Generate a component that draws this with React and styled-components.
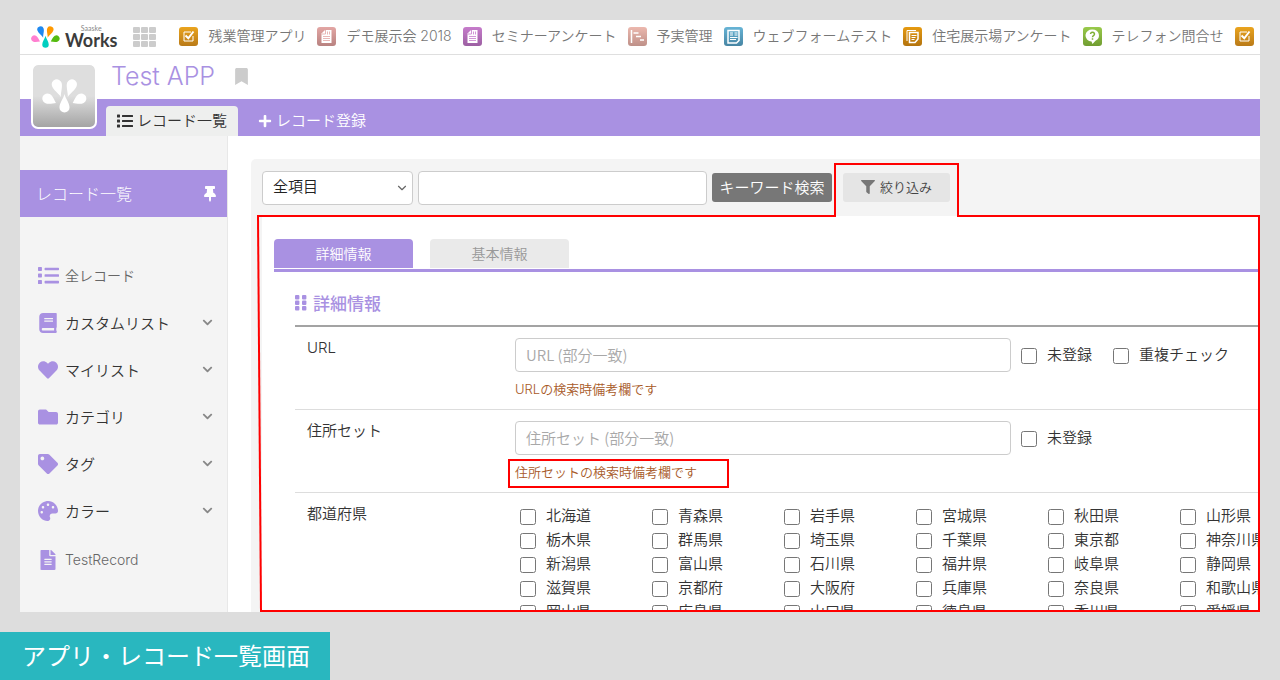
import React from "react";
import styled, { createGlobalStyle } from "styled-components";
import {
  FaBook,
  FaBookmark,
  FaChevronDown,
  FaFileAlt,
  FaFilter,
  FaFolder,
  FaHeart,
  FaList,
  FaPalette,
  FaPlus,
  FaTag,
  FaThumbtack,
} from "react-icons/fa";
import { LuChevronDown } from "react-icons/lu";

const PURPLE = "#a991e2";
const PANEL = "#f4f4f4";
const RED = "#ff0000";

const GlobalStyle = createGlobalStyle`
  * {
    box-sizing: border-box;
  }
  body {
    margin: 0;
    background: #dddddd;
    color: #333333;
    font-family: Inter, "Noto Sans CJK JP", sans-serif;
    font-size: 15px;
    font-weight: 350;
  }
  input,
  select,
  button {
    font: inherit;
  }
  a {
    color: inherit;
    text-decoration: none;
  }
`;

const Page = styled.div`
  display: flex;
  flex-direction: column;
  height: 100vh;
`;

const Frame = styled.div`
  display: flex;
  flex: 1;
  flex-direction: column;
  min-height: 0;
  margin: 20px;
  overflow: hidden;
  background: #ffffff;
`;

const Caption = styled.footer`
  align-self: flex-start;
  padding: 2px 20px 0 22px;
  background: #29b7bf;
  color: #ffffff;
  font-size: 24px;
  font-weight: 400;
  line-height: 46px;
`;

/* top bar */

const TopBar = styled.header`
  display: flex;
  flex-shrink: 0;
  align-items: center;
  height: 35px;
  padding-left: 11px;
  border-bottom: 1px solid #dfdfdf;
  white-space: nowrap;
`;

const Logo = styled.a`
  display: flex;
  align-items: center;
  gap: 5px;
`;

const LogoText = styled.span`
  display: flex;
  flex-direction: column;
  padding-bottom: 2px;
  color: #3c3c3c;
  font-family: Lato, sans-serif;
  font-size: 18px;
  font-weight: 700;
  line-height: 16px;
`;

const LogoSmall = styled.small`
  align-self: center;
  color: #888888;
  font-size: 7px;
  font-weight: 400;
  line-height: 8px;
`;

const MenuButton = styled.button`
  display: flex;
  margin: 0 22px 0 16px;
  padding: 0;
  border: 0;
  background: none;
`;

const AppLinks = styled.nav`
  display: flex;
  gap: 11px;
`;

const AppLink = styled.a`
  display: flex;
  align-items: center;
  gap: 10px;
  padding-bottom: 4px;
  color: #777777;
  font-size: 14px;
`;

const Tile = styled.span`
  display: flex;
  width: 19px;
  height: 19px;
  margin-top: 3px;
  border-radius: 3px;
  background: linear-gradient(${(p) => p.$from}, ${(p) => p.$to});
`;

/* app heading */

const AppHead = styled.div`
  position: relative;
  flex-shrink: 0;
`;

const AppIcon = styled.div`
  position: absolute;
  top: 8px;
  left: 11px;
  display: flex;
  align-items: center;
  justify-content: center;
  width: 66px;
  height: 66px;
  border: 2px solid #ffffff;
  border-radius: 7px;
  background: linear-gradient(#dedede 50%, #a4a4a4) padding-box;
`;

const TitleRow = styled.div`
  display: flex;
  align-items: center;
  gap: 18px;
  height: 44px;
  padding: 0 0 2px 91px;
  color: #cccccc;
`;

const Title = styled.h1`
  margin: 0;
  color: ${PURPLE};
  font-size: 25px;
  font-weight: 300;
`;

const NavTabs = styled.nav`
  display: flex;
  align-items: flex-end;
  height: 37px;
  padding-left: 86px;
  background: ${PURPLE};
`;

const NavTab = styled.a`
  display: flex;
  align-items: center;
  gap: 4px;
  height: 30px;
  padding: 0 ${(p) => (p.$active ? 11 : 20)}px 4px;
  border-radius: 4px 4px 0 0;
  background: ${(p) => (p.$active ? "#eeefee" : "none")};
  color: ${(p) => (p.$active ? "#333333" : "#ffffff")};

  svg {
    margin-top: 3px;
  }
`;

/* sidebar */

const Body = styled.div`
  display: flex;
  flex: 1;
  min-height: 0;
`;

const Sidebar = styled.aside`
  flex: 0 0 208px;
  padding-top: 34px;
  border-right: 1px solid #e8e8e8;
  background: ${PANEL};
`;

const SideTitle = styled.div`
  display: flex;
  align-items: center;
  justify-content: space-between;
  height: 47px;
  margin-bottom: 35px;
  padding: 0 9px 2px 16px;
  background: ${PURPLE};
  color: #ffffff;
  font-size: 16px;
  font-weight: 300;

  svg {
    margin-top: 2px;
  }
`;

const SideItem = styled.a`
  display: grid;
  grid-template-columns: 22px 1fr 12px;
  align-items: center;
  gap: 6px;
  height: 47px;
  padding: 0 13px 1px 17px;
  color: ${(p) => (p.$plain ? "#666666" : "#333333")};
  font-size: ${(p) => (p.$plain ? 14 : 15)}px;

  svg {
    color: #888888;
  }
  svg:first-child {
    justify-self: center;
    margin-top: 1px;
    color: ${PURPLE};
  }
`;

const SideList = styled.nav`
  display: flex;
  flex-direction: column;
  margin-bottom: 2px;
`;

/* search area */

const Main = styled.main`
  position: relative;
  flex: 1;
  min-width: 0;
  padding: 23px 0 0 23px;
  overflow: hidden;
`;

const SearchPanel = styled.form`
  min-height: 100%;
  padding: 12px 0 0 11px;
  border-radius: 5px 0 0 0;
  background: ${PANEL};
`;

const SearchRow = styled.div`
  display: flex;
  align-items: center;
  height: 33px;
  margin-bottom: 12px;
`;

const SelectBox = styled.div`
  display: grid;
  align-items: center;
  width: 151px;
  margin-right: 5px;

  select,
  svg {
    grid-area: 1 / 1;
  }
  svg {
    justify-self: end;
    margin-right: 4px;
    color: #666666;
    pointer-events: none;
  }
`;

const Select = styled.select`
  height: 34px;
  padding: 0 10px 2px;
  border: 1px solid #cccccc;
  border-radius: 4px;
  appearance: none;
  background: #ffffff;
  color: #222222;
`;

const TextInput = styled.input`
  width: ${(p) => p.$width}px;
  height: 34px;
  padding: 0 10px 2px;
  border: 1px solid #cccccc;
  border-radius: 4px;
  background: #ffffff;
  font-family: "Noto Sans CJK JP", sans-serif;

  &::placeholder {
    color: #a8a8a8;
  }
`;

const KeywordButton = styled.button`
  width: 120px;
  height: 29px;
  margin: 0 11px 0 5px;
  padding: 0 0 2px;
  border: 0;
  border-radius: 3px;
  background: #777777;
  color: #ffffff;
  white-space: nowrap;
`;

const FilterButton = styled.button`
  display: flex;
  align-items: center;
  justify-content: center;
  gap: 5px;
  width: 107px;
  height: 29px;
  padding: 0 0 2px;
  border: 0;
  border-radius: 3px;
  background: #e5e5e5;
  color: #444444;
  font-size: 13px;

  svg {
    color: #777777;
  }
`;

const Conditions = styled.section`
  padding: 23px 0 0 12px;
  background: #ffffff;
`;

const InfoTabs = styled.div`
  display: flex;
  gap: 17px;
  padding-bottom: 1px;
  border-bottom: 3px solid ${PURPLE};
`;

const InfoTab = styled.button`
  width: 139px;
  height: 29px;
  padding: 0 0 2px;
  border: 0;
  border-radius: 4px 4px 0 0;
  background: ${(p) => (p.$active ? PURPLE : "#eaeaea")};
  color: ${(p) => (p.$active ? "#ffffff" : "#999999")};
  font-size: 14px;
`;

const Fields = styled.div`
  margin-left: 21px;
`;

const SectionTitle = styled.h2`
  display: flex;
  align-items: center;
  gap: 6px;
  height: 55px;
  margin: 0;
  padding-top: 8px;
  border-bottom: 2px solid #a3a3a3;
  color: ${PURPLE};
  font-size: 17px;
  font-weight: 500;
`;

const FieldRow = styled.div`
  display: grid;
  grid-template-columns: 208px 1fr;
  padding: 11px 0 4px 12px;
  border-bottom: 1px solid #dddddd;
  line-height: 20px;
`;

const Inputs = styled.div`
  display: flex;
  align-items: center;
`;

const Checks = styled.div`
  display: flex;
  gap: 21px;
  padding-left: 10px;
`;

const CheckLabel = styled.label`
  display: flex;
  align-items: center;
  gap: 10px;
  white-space: nowrap;

  input {
    width: 16px;
    height: 16px;
    margin: 2px 0 0;
  }
`;

const Note = styled.p`
  width: 221px;
  margin: 4px 0 0 -7px;
  padding: 0 5px 2px;
  border: 2px solid ${(p) => (p.$marked ? RED : "transparent")};
  color: #a85a28;
  font-size: 13px;
  line-height: 23px;
`;

const Prefectures = styled.div`
  display: grid;
  grid-template-columns: repeat(6, 132px);
  grid-auto-rows: 24px;
  padding-left: 5px;
  line-height: 22px;
`;

const Outline = styled.svg`
  position: absolute;
  top: 0;
  left: 0;
  width: calc(100% - 1px);
  height: calc(100% - 1px);
  overflow: visible;
  pointer-events: none;
  stroke: ${RED};
  stroke-width: 2;
  stroke-linecap: square;
`;

const LONG_DROP = "M0 40C-2 28-15 13-15 0A15 15 0 0 1 15 0C15 13 2 28 0 40Z";
const SHORT_DROP = "M0 29C-5 21-15 11-15 0A15 15 0 0 1 15 0C15 11 5 21 0 29Z";
const PETALS = [
  { x: 44, y: 16, turn: -18, d: LONG_DROP, color: "#1e88f0" },
  { x: 89, y: 16, turn: 18, d: LONG_DROP, color: "#ff9900" },
  { x: 16, y: 58, turn: -62, d: SHORT_DROP, color: "#ff7fd0" },
  { x: 117, y: 58, turn: 62, d: SHORT_DROP, color: "#55bb10" },
  { x: 67, y: 85, turn: 180, d: LONG_DROP, color: "#00cfc0" },
];

const Petals = ({ width, mono }) => (
  <svg width={width} viewBox="0 0 134 100" aria-hidden="true">
    {PETALS.map((p) => (
      <path
        key={p.turn}
        d={p.d}
        fill={mono || p.color}
        transform={`translate(${p.x} ${p.y}) rotate(${p.turn})`}
      />
    ))}
  </svg>
);

const GridIcon = () => (
  <svg width="24" height="21" viewBox="0 0 24 21" fill="#cccccc">
    {[0, 8, 16].map((x) =>
      [0, 7, 14].map((y) => (
        <rect key={`${x}-${y}`} x={x} y={y} width="7" height="6" rx="1" />
      ))
    )}
  </svg>
);

const DotsIcon = () => (
  <svg width="12" height="16" viewBox="0 0 12 16" fill="currentColor">
    {[0, 7].map((x) =>
      [0, 5.5, 11].map((y) => (
        <rect key={`${x}-${y}`} x={x} y={y} width="4.400" height="4.400" rx="1" />
      ))
    )}
  </svg>
);

const GLYPHS = {
  check: (
    <g fill="none" stroke="#fff">
      <path d="M12 5H5v9h9V9" />
      <path d="M6.5 8.5l2.8 2.8L14.5 4.5" strokeWidth="2" />
    </g>
  ),
  paper: (
    <g>
      <path d="M8 3h6.500v13H4.500V6.500z" fill="#fff" />
      <path
        d="M4.500 7H8.500V3M6 9.500h7M6 11.500h7M6 13.500h7M10.500 4.500v3M12.500 4.500v3"
        stroke="currentColor"
        fill="none"
        strokeWidth="0.800"
      />
    </g>
  ),
  gantt: (
    <path d="M3.500 3v13M5.500 6h5M8 9.500h5M12 13h4" stroke="#fff" strokeWidth="1.500" />
  ),
  form: (
    <g fill="none" stroke="#fff">
      <path d="M4 3.500h11v10l-2.500 2.500H4z" strokeWidth="1.500" />
      <path d="M6 6h3M10.500 6h3M6 8h3M10.500 8h3M6 10.500h7.500M6 12.500h6" />
    </g>
  ),
  copy: (
    <g fill="none" stroke="#fff">
      <path d="M4 14V3.500h9" />
      <path d="M6.500 5.500h8.500v6.500l-3 3.500H6.500z" strokeWidth="1.500" />
      <path d="M8.500 8.500h5M8.500 10.500h4M8.500 12.500h3" />
    </g>
  ),
  question: (
    <g>
      <path d="M9.500 2.500a6.500 6 0 0 1 3 11.300L9.500 17l-1-2.500A6.500 6 0 0 1 9.500 2.500z" fill="#fff" />
      <path
        d="M7.500 7a2 1.800 0 1 1 3 1.600q-1 .6-1 1.600M9.500 11.300v1.400"
        fill="none"
        stroke="#7fb135"
        strokeWidth="1.500"
      />
    </g>
  ),
};

const APPS = [
  { name: "残業管理アプリ", glyph: "check", from: "#eaa41e", to: "#b97a18" },
  { name: "デモ展示会 2018", glyph: "paper", from: "#e3a6a4", to: "#b88280" },
  { name: "セミナーアンケート", glyph: "paper", from: "#c67ccb", to: "#9c5fa2" },
  { name: "予実管理", glyph: "gantt", from: "#ecb8ae", to: "#be9088" },
  { name: "ウェブフォームテスト", glyph: "form", from: "#67b4d6", to: "#4785a3" },
  { name: "住宅展示場アンケート", glyph: "copy", from: "#e69a10", to: "#b3730e" },
  { name: "テレフォン問合せ", glyph: "question", from: "#99ca4b", to: "#719d31" },
  { name: "", glyph: "check", from: "#eaa41e", to: "#b97a18" },
];

const SIDE_ITEMS = [
  { name: "カスタムリスト", icon: FaBook },
  { name: "マイリスト", icon: FaHeart },
  { name: "カテゴリ", icon: FaFolder },
  { name: "タグ", icon: FaTag },
  { name: "カラー", icon: FaPalette },
];

const TEXT_FIELDS = [
  { id: "url", label: "URL", checks: ["未登録", "重複チェック"] },
  { id: "address", label: "住所セット", checks: ["未登録"], marked: true },
];

const PREFECTURES = [
  "北海道", "青森県", "岩手県", "宮城県", "秋田県", "山形県",
  "栃木県", "群馬県", "埼玉県", "千葉県", "東京都", "神奈川県",
  "新潟県", "富山県", "石川県", "福井県", "岐阜県", "静岡県",
  "滋賀県", "京都府", "大阪府", "兵庫県", "奈良県", "和歌山県",
  "岡山県", "広島県", "山口県", "徳島県", "香川県", "愛媛県",
];

const Check = ({ label }) => (
  <CheckLabel>
    <input type="checkbox" />
    {label}
  </CheckLabel>
);

const App = () => {
  return (
    <Page>
      <GlobalStyle />
      <Frame>
        <TopBar>
          <Logo href="#">
            <Petals width={29} />
            <LogoText>
              <LogoSmall>Saaske</LogoSmall>
              Works
            </LogoText>
          </Logo>
          <MenuButton type="button" aria-label="メニュー">
            <GridIcon />
          </MenuButton>
          <AppLinks>
            {APPS.map((app, i) => (
              <AppLink key={i} href="#">
                <Tile $from={app.from} $to={app.to}>
                  <svg width="19" height="19" viewBox="0 0 19 19" color={app.from}>
                    {GLYPHS[app.glyph]}
                  </svg>
                </Tile>
                {app.name}
              </AppLink>
            ))}
          </AppLinks>
        </TopBar>

        <AppHead>
          <TitleRow>
            <Title>Test APP</Title>
            <FaBookmark size={17} />
          </TitleRow>
          <NavTabs>
            <NavTab href="#" $active>
              <FaList size={16} />
              レコード一覧
            </NavTab>
            <NavTab href="#">
              <FaPlus size={14} />
              レコード登録
            </NavTab>
          </NavTabs>
          <AppIcon>
            <Petals width={45} mono="#ffffff" />
          </AppIcon>
        </AppHead>

        <Body>
          <Sidebar>
            <SideTitle>
              レコード一覧
              <FaThumbtack size={16} />
            </SideTitle>
            <SideList>
              <SideItem href="#" $plain>
                <FaList size={21} />
                全レコード
              </SideItem>
              {SIDE_ITEMS.map(({ name, icon: Icon }) => (
                <SideItem key={name} href="#">
                  <Icon size={20} />
                  {name}
                  <FaChevronDown size={11} />
                </SideItem>
              ))}
            </SideList>
            <SideItem href="#" $plain>
              <FaFileAlt size={20} />
              TestRecord
            </SideItem>
          </Sidebar>

          <Main>
            <SearchPanel>
              <SearchRow>
                <SelectBox>
                  <Select aria-label="検索項目">
                    <option>全項目</option>
                  </Select>
                  <LuChevronDown size={14} />
                </SelectBox>
                <TextInput $width={289} type="text" aria-label="キーワード" />
                <KeywordButton type="button">キーワード検索</KeywordButton>
                <FilterButton type="button">
                  <FaFilter size={14} />
                  絞り込み
                </FilterButton>
              </SearchRow>

              <Conditions>
                <InfoTabs>
                  <InfoTab type="button" $active>
                    詳細情報
                  </InfoTab>
                  <InfoTab type="button">基本情報</InfoTab>
                </InfoTabs>
                <Fields>
                  <SectionTitle>
                    <DotsIcon />
                    詳細情報
                  </SectionTitle>
                  {TEXT_FIELDS.map((field) => (
                    <FieldRow key={field.id}>
                      <label htmlFor={field.id}>{field.label}</label>
                      <div>
                        <Inputs>
                          <TextInput
                            id={field.id}
                            $width={496}
                            type="text"
                            placeholder={`${field.label} (部分一致)`}
                          />
                          <Checks>
                            {field.checks.map((label) => (
                              <Check key={label} label={label} />
                            ))}
                          </Checks>
                        </Inputs>
                        <Note $marked={field.marked}>
                          {field.label}の検索時備考欄です
                        </Note>
                      </div>
                    </FieldRow>
                  ))}
                  <FieldRow role="group" aria-labelledby="prefecture">
                    <span id="prefecture">都道府県</span>
                    <Prefectures>
                      {PREFECTURES.map((name) => (
                        <Check key={name} label={name} />
                      ))}
                    </Prefectures>
                  </FieldRow>
                </Fields>
              </Conditions>
            </SearchPanel>

            {/* highlights the filter button together with its conditions */}
            <Outline aria-hidden="true">
              <line x1="30" y1="80" x2="607" y2="80" />
              <line x1="607" y1="80" x2="607" y2="28" />
              <line x1="607" y1="28" x2="730" y2="28" />
              <line x1="730" y1="28" x2="730" y2="80" />
              <line x1="730" y1="80" x2="100%" y2="80" />
              <line x1="100%" y1="80" x2="100%" y2="100%" />
              <line x1="33" y1="100%" x2="100%" y2="100%" />
              <line x1="30" y1="80" x2="33" y2="100%" />
            </Outline>
          </Main>
        </Body>
      </Frame>
      <Caption>アプリ・レコード一覧画面</Caption>
    </Page>
  );
};

export default App;
